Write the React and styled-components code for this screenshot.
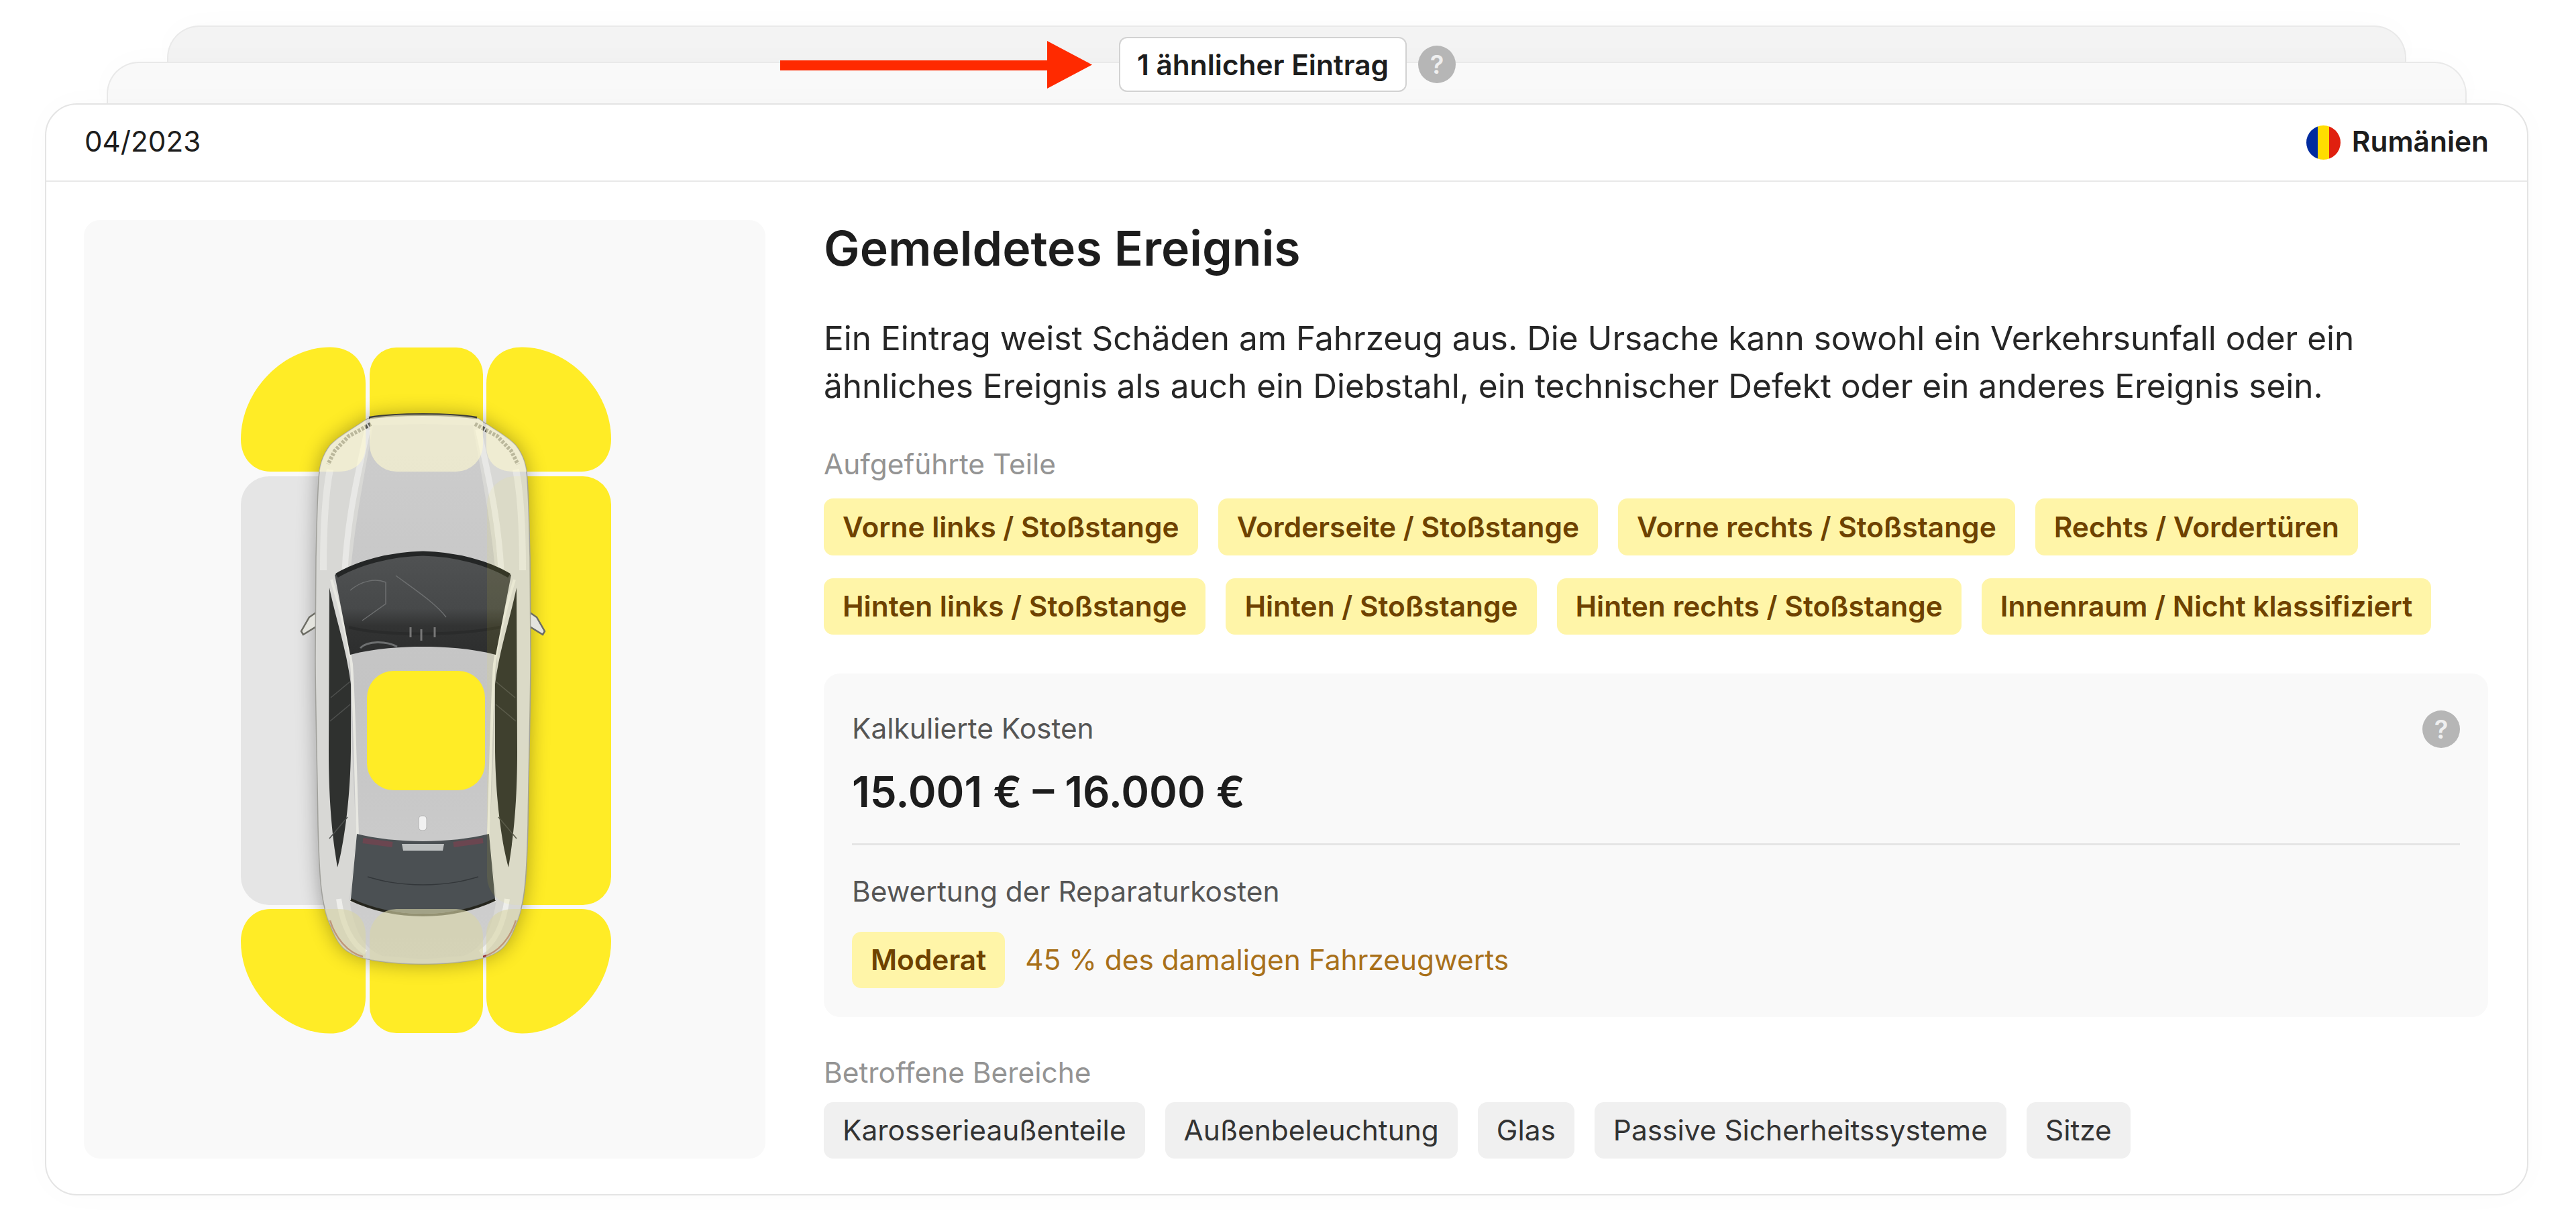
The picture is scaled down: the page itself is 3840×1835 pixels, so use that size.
import React from 'react';
import styled, { createGlobalStyle } from 'styled-components';

const Global = createGlobalStyle`
  html, body {
    margin: 0;
    padding: 0;
    background: #fff;
  }
  body {
    font-family: Inter, "Liberation Sans", sans-serif;
    color: #1d1d1d;
  }
  * { box-sizing: border-box; }
`;

const Page = styled.div`
  width: 3840px;
  height: 1835px;
  padding: 38px 71px 0 67px;
  overflow: hidden;
`;

const Stack = styled.div`
  position: relative;
`;

const BackCard = styled.div`
  height: ${p => p.$height}px;
  margin: 0 ${p => p.$inset}px;
  background: ${p => p.$bg};
  border: 2.5px solid #e9e9e9;
  border-bottom: 0;
  border-radius: 48px 48px 0 0;
  box-shadow: 0 0 50px rgba(0, 0, 0, .02);
`;

const SimilarRow = styled.div`
  position: absolute;
  left: 1096px;
  top: 17px;
  display: flex;
  align-items: center;
`;

const Arrow = styled.svg`
  width: 465px;
  height: 71px;
  margin-right: 40px;
  display: block;
`;

const SimilarBadge = styled.div`
  width: 429px;
  height: 82px;
  margin-right: 17px;
  display: flex;
  align-items: center;
  justify-content: center;
  background: #fff;
  border: 2.5px solid #d2d2d2;
  border-radius: 12px;
  font-size: 42.4px;
  font-weight: 600;
  white-space: nowrap;
`;

const Help = styled.span`
  width: 56px;
  height: 56px;
  flex: none;
  display: flex;
  align-items: center;
  justify-content: center;
  border-radius: 50%;
  background: #b6b6b6;
  color: #efefef;
  font-size: 38px;
  font-weight: 600;
`;

const Card = styled.div`
  background: #fff;
  border: 2.5px solid #e4e4e4;
  border-radius: 48px;
  box-shadow: 0 0 50px rgba(0, 0, 0, .02);
`;

const CardHead = styled.div`
  height: 115px;
  padding: 0 57px 0 57px;
  display: flex;
  align-items: center;
  justify-content: space-between;
  border-bottom: 2.5px solid #e8e8e8;
`;

const DateText = styled.span`
  margin-top: -4px;
  font-size: 42.2px;
`;

const Country = styled.div`
  display: flex;
  align-items: center;
  gap: 17px;
`;

const CountryName = styled.span`
  margin-top: -4px;
  font-size: 42.4px;
  font-weight: 600;
`;

const Flag = styled.svg`
  width: 51px;
  height: 51px;
  display: block;
`;

const CardBody = styled.div`
  display: flex;
  gap: 87px;
  padding: 57px 58px 53px 56px;
`;

const CarPanel = styled.div`
  width: 1016px;
  flex: none;
  display: flex;
  align-items: center;
  justify-content: center;
  padding: 2px 0 0 3px;
  background: #f9f9f9;
  border-radius: 24px;
`;

const CarDrawing = styled.svg`
  width: 552px;
  height: 1024px;
  display: block;
`;

const Details = styled.div`
  flex: 1;
  min-width: 0;
`;

const Title = styled.h1`
  margin: 0;
  font-size: 71.6px;
  line-height: 84px;
  font-weight: 600;
`;

const Lead = styled.p`
  margin: 57px 0 0;
  font-size: 49.5px;
  line-height: 71px;
  font-weight: 400;
  color: #262626;
`;

const SectionLabel = styled.div`
  margin-top: ${p => p.$top}px;
  font-size: 42.4px;
  line-height: 56px;
  color: #949494;
`;

const Tags = styled.div`
  margin-top: ${p => p.$top}px;
  display: flex;
  flex-wrap: wrap;
  gap: 34px 30px;
`;

const Tag = styled.span`
  height: 84.5px;
  padding: 0 28px;
  display: inline-flex;
  align-items: center;
  border-radius: 14px;
  font-size: 42.4px;
  font-weight: ${p => (p.$warn ? 600 : 400)};
  color: ${p => (p.$warn ? '#6e4200' : '#333')};
  background: ${p => (p.$warn ? '#fff5a8' : '#f0f0f0')};
  white-space: nowrap;
`;

const CostBox = styled.div`
  position: relative;
  margin-top: 58px;
  padding: 54px 42px 42.5px;
  background: #f9f9f9;
  border-radius: 24px;
`;

const CostHelp = styled(Help)`
  position: absolute;
  top: 55px;
  right: 42px;
`;

const CostLabel = styled.div`
  margin-top: ${p => p.$top || 0}px;
  font-size: 42.4px;
  line-height: 56px;
  color: #555;
`;

const CostValue = styled.div`
  margin-top: 27px;
  font-size: 63.5px;
  line-height: 78px;
  font-weight: 600;
`;

const Divider = styled.div`
  height: 2.5px;
  margin-top: 38px;
  background: #e5e5e5;
`;

const Rating = styled.div`
  margin-top: 32px;
  display: flex;
  align-items: center;
  gap: 30px;
`;

const RatingNote = styled.span`
  font-size: 42.4px;
  color: #a8701a;
`;

const partsRowOne = [
  'Vorne links / Stoßstange',
  'Vorderseite / Stoßstange',
  'Vorne rechts / Stoßstange',
  'Rechts / Vordertüren',
  'Hinten links / Stoßstange',
  'Hinten / Stoßstange',
  'Hinten rechts / Stoßstange',
  'Innenraum / Nicht klassifiziert',
];

const areas = ['Karosserieaußenteile', 'Außenbeleuchtung', 'Glas', 'Passive Sicherheitssysteme', 'Sitze'];

const CORNER = 'M 492 517.5 C 525 517.5 545 540 545 572 L 545 665 C 545 688 530 703 505 703 L 403 703 C 378 703 359 683 359 655 C 359 580 425 517.5 492 517.5 Z';
const BODY_EDGE = 'M 631 618 C 600 618 570 619 548 624 C 525 640 505 650 492 664 C 480 680 476 695 475 715 C 472 760 472 800 471 830 L 470 980 C 470 1040 473 1150 474 1230 C 475 1270 476 1300 479 1325 C 482 1350 486 1365 492 1378 C 500 1400 508 1412 518 1418 C 530 1426 545 1430 560 1432 C 585 1436 610 1437 631 1437';
const BODY_HALF = `${BODY_EDGE} Z`;
const FLIP_X = 'matrix(-1 0 0 1 1261 0)';

const Mirrored = ({ children }) => (
  <>
    <g>{children}</g>
    <g transform={FLIP_X}>{children}</g>
  </>
);

const Corners = ({ fill, opacity }) => (
  <g fill={fill} opacity={opacity}>
    <path d={CORNER} />
    <path d={CORNER} transform="matrix(-1 0 0 1 1270 0)" />
    <rect x="551" y="518" width="169" height="185" rx="40" />
  </g>
);

const CarDiagram = () => (
  <CarDrawing viewBox="359 517 552 1024">
    <defs>
      <filter id="carShadow" x="-30%" y="-10%" width="160%" height="120%">
        <feGaussianBlur stdDeviation="15" />
      </filter>
      <clipPath id="carClip">
        <path d={BODY_HALF} />
        <path d={BODY_HALF} transform={FLIP_X} />
      </clipPath>
      <linearGradient id="glass" x1="0" y1="0" x2="0" y2="1">
        <stop offset="0" stopColor="#505253" />
        <stop offset=".55" stopColor="#47494a" />
        <stop offset=".72" stopColor="#323333" />
        <stop offset="1" stopColor="#2d2e2e" />
      </linearGradient>
      <linearGradient id="silver" x1="0" y1="0" x2="0" y2="1">
        <stop offset="0" stopColor="#cdcdcd" />
        <stop offset=".5" stopColor="#c4c4c4" />
        <stop offset="1" stopColor="#cfcfcf" />
      </linearGradient>
    </defs>

    {/* damage zones under the car */}
    <Corners fill="#ffec26" />
    <g transform="matrix(1 0 0 -1 0 2058)">
      <Corners fill="#ffec26" />
    </g>
    <rect x="359" y="710" width="186" height="639" rx="42" fill="#e5e5e5" />
    <rect x="726" y="710" width="185" height="639" rx="42" fill="#ffec26" />

    {/* car shadow */}
    <g filter="url(#carShadow)" opacity=".33" fill="#000">
      <path d={BODY_HALF} />
      <path d={BODY_HALF} transform={FLIP_X} />
    </g>

    {/* mirrors */}
    <Mirrored>
      <path d="M 486 903 L 481 928 L 452 946 L 449 941 L 461 920 Z" fill="#e4e4de" stroke="#6c6c64" strokeWidth="2.5" />
    </Mirrored>

    {/* body */}
    <Mirrored>
      <path d={BODY_HALF} fill="#d8d8d5" />
      <path d={BODY_EDGE} fill="none" stroke="#a0a09b" strokeWidth="1.5" />
      <path d="M 631 632 L 556 634 C 545 700 528 780 522 860 L 520 976 C 522 1040 525 1120 531 1245 L 521 1340 C 526 1380 540 1415 570 1425 L 631 1430 Z" fill="url(#silver)" />
      <path d="M 548 640 C 535 700 518 770 514 850" stroke="#f0f0ec" strokeWidth="9" fill="none" opacity=".7" />
      <path d="M 492 700 C 484 740 482 790 482 850" stroke="#f2f2ee" strokeWidth="10" fill="none" opacity=".55" />
      <path d="M 505 1340 C 510 1375 522 1405 545 1420" stroke="#f6f6f2" strokeWidth="8" fill="none" opacity=".75" />

      {/* headlight cluster */}
      <path d="M 553 632 L 520 650 L 499 672 L 489 692" stroke="#56564f" strokeWidth="6" strokeDasharray="4 2" fill="none" />
      <path d="M 550 623 C 575 619 600 618 631 618" stroke="#3c3c38" strokeWidth="4" fill="none" />
      <path d="M 492 1372 C 500 1398 518 1420 541 1426" stroke="#96302e" strokeWidth="2.5" fill="none" />

      {/* side glass */}
      <path d="M 491 876 C 500 920 517 970 523 1020 L 523 1120 C 522 1200 511 1265 503 1293 C 496 1250 490 1200 490 1120 Z" fill="#2f312f" />
      <path d="M 493 1040 L 522 1016 M 491 1250 L 518 1218 M 492 1075 L 522 1050" stroke="#4e504e" strokeWidth="1.5" fill="none" />
      <path d="M 494 864 C 505 900 518 950 524 990 C 528 1050 530 1150 533 1245 L 524 1345" stroke="#e8e8e2" strokeWidth="4" fill="none" />

      {/* windshield */}
      <path d="M 631 823 C 580 824 530 838 499 857 L 522 976 C 560 966 600 964 631 964 Z" fill="url(#glass)" />
      <path d="M 631 825 C 580 826 532 840 502 858" stroke="#242626" strokeWidth="7" fill="none" />

      {/* rear window */}
      <path d="M 631 1254 C 595 1254 560 1250 532 1243 L 523 1340 C 555 1355 590 1362 631 1362 Z" fill="#4b5053" />
      <path d="M 631 1364 C 590 1364 555 1356 523 1341" stroke="#26261e" strokeWidth="4" fill="none" />
      <path d="M 541 1253 L 585 1259" stroke="#6b4650" strokeWidth="8" fill="none" />
      <path d="M 631 1319 C 590 1319 565 1312 548 1307" stroke="#33373a" strokeWidth="1.5" fill="none" />
      <path d="M 631 1258 L 599 1258 L 601 1268 L 631 1268 Z" fill="#bcbfbf" />
    </Mirrored>

    {/* dashboard inside the windshield */}
    <g fill="none" stroke="#6d6f70" strokeWidth="1.5">
      <path d="M 590 858 C 620 880 650 900 665 920" />
      <path d="M 520 935 C 570 948 680 948 745 935" stroke="#2a2b2b" strokeWidth="4" />
      <path d="M 537 966 C 548 955 575 955 592 964" strokeWidth="3" />
      <path d="M 522 880 C 540 865 560 862 575 868 L 575 900 L 540 925" />
      <path d="M 612 935 L 612 950 M 628 938 L 628 955 M 648 935 L 648 950" strokeWidth="3" stroke="#777" />
    </g>

    {/* parts of the zones that show through the car */}
    <g clipPath="url(#carClip)">
      <Corners fill="#fffad0" opacity=".6" />
      <g transform="matrix(1 0 0 -1 0 2058)">
        <Corners fill="#d8d6a8" opacity=".62" />
      </g>
      <rect x="726" y="710" width="185" height="639" rx="42" fill="#ffec26" opacity=".08" />
    </g>

    {/* antenna */}
    <rect x="624" y="1216" width="12" height="22" rx="5" fill="#f1f1f1" stroke="#b0b0b0" strokeWidth="1" />

    {/* sunroof zone sits on top */}
    <rect x="547" y="1000" width="176" height="178" rx="40" fill="#ffec26" />
  </CarDrawing>
);

export default function App() {
  return (
    <Page>
      <Global />
      <Stack>
        <BackCard $height={54} $inset={182} $bg="#f3f3f3" />
        <BackCard $height={62} $inset={92} $bg="#f9f9f9" />
        <SimilarRow>
          <Arrow viewBox="0 0 465 71">
            <path d="M 0 29 H 398 V 0 L 465 35.5 L 398 71 V 44 H 0 Z" fill="#ff2a00" />
          </Arrow>
          <SimilarBadge>1 ähnlicher Eintrag</SimilarBadge>
          <Help>?</Help>
        </SimilarRow>
        <Card>
          <CardHead>
            <DateText>04/2023</DateText>
            <Country>
              <Flag viewBox="0 0 51 51">
                <clipPath id="flagClip"><circle cx="25.5" cy="25.5" r="25.5" /></clipPath>
                <g clipPath="url(#flagClip)">
                  <rect width="17" height="51" fill="#002b9f" />
                  <rect x="17" width="17" height="51" fill="#ffdd00" />
                  <rect x="34" width="17" height="51" fill="#e0200f" />
                </g>
              </Flag>
              <CountryName>Rumänien</CountryName>
            </Country>
          </CardHead>
          <CardBody>
            <CarPanel>
              <CarDiagram />
            </CarPanel>
            <Details>
              <Title>Gemeldetes Ereignis</Title>
              <Lead>
                Ein Eintrag weist Schäden am Fahrzeug aus. Die Ursache kann sowohl ein Verkehrsunfall oder ein
                <br />
                ähnliches Ereignis als auch ein Diebstahl, ein technischer Defekt oder ein anderes Ereignis sein.
              </Lead>
              <SectionLabel $top={53}>Aufgeführte Teile</SectionLabel>
              <Tags $top={23}>
                {partsRowOne.map(part => <Tag $warn key={part}>{part}</Tag>)}
              </Tags>
              <CostBox>
                <CostHelp>?</CostHelp>
                <CostLabel>Kalkulierte Kosten</CostLabel>
                <CostValue>15.001 € – 16.000 €</CostValue>
                <Divider />
                <CostLabel $top={41}>Bewertung der Reparaturkosten</CostLabel>
                <Rating>
                  <Tag $warn>Moderat</Tag>
                  <RatingNote>45 % des damaligen Fahrzeugwerts</RatingNote>
                </Rating>
              </CostBox>
              <SectionLabel $top={55}>Betroffene Bereiche</SectionLabel>
              <Tags $top={16}>
                {areas.map(area => <Tag key={area}>{area}</Tag>)}
              </Tags>
            </Details>
          </CardBody>
        </Card>
      </Stack>
    </Page>
  );
}
